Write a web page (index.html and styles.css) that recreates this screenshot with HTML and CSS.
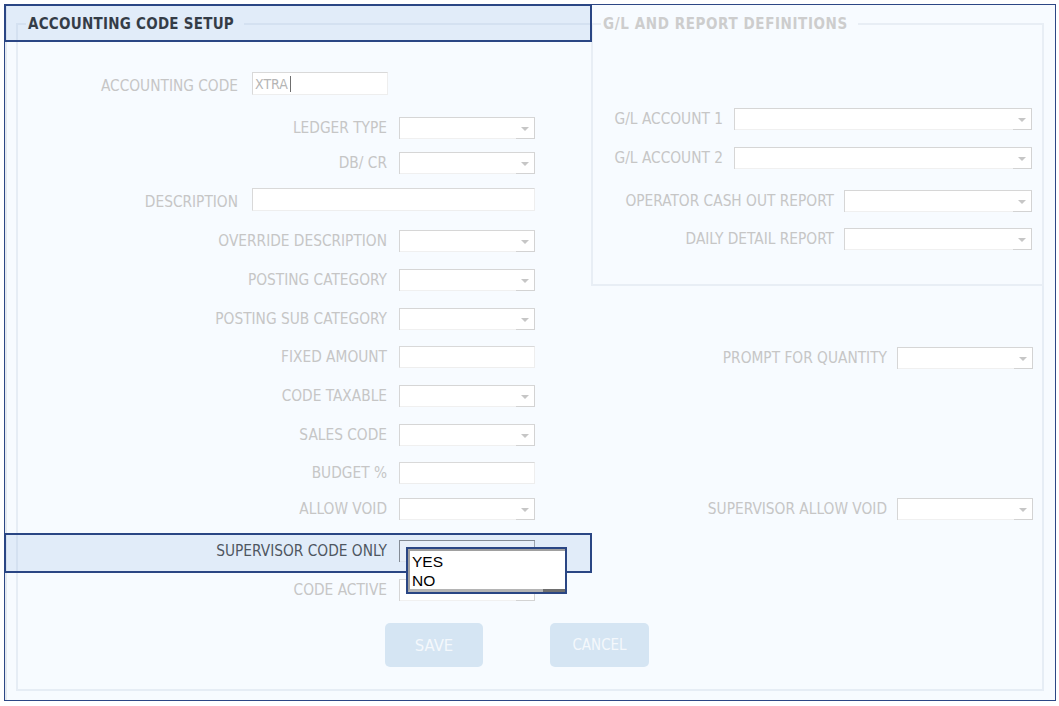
FILE: index.html
```html
<!DOCTYPE html>
<html>
<head>
<meta charset="utf-8">
<link rel="stylesheet" href="styles.css">
</head>
<body>
<div class="frame">
  <fieldset class="panel">
    <legend class="legend legend-main">ACCOUNTING CODE SETUP</legend>
    <div class="panel-body">
      <div class="col-left">
        <div class="row row-wide"><span class="lbl">ACCOUNTING CODE</span><div class="input input-code"><span class="val">XTRA</span><span class="caret"></span></div></div>
        <div class="row"><span class="lbl">LEDGER TYPE</span><div class="select"><span class="sel-body"></span><span class="sel-arrow"></span></div></div>
        <div class="row"><span class="lbl">DB/ CR</span><div class="select"><span class="sel-body"></span><span class="sel-arrow"></span></div></div>
        <div class="row row-wide"><span class="lbl">DESCRIPTION</span><div class="input input-desc"></div></div>
        <div class="row"><span class="lbl">OVERRIDE DESCRIPTION</span><div class="select"><span class="sel-body"></span><span class="sel-arrow"></span></div></div>
        <div class="row"><span class="lbl">POSTING CATEGORY</span><div class="select"><span class="sel-body"></span><span class="sel-arrow"></span></div></div>
        <div class="row"><span class="lbl">POSTING SUB CATEGORY</span><div class="select"><span class="sel-body"></span><span class="sel-arrow"></span></div></div>
        <div class="row"><span class="lbl">FIXED AMOUNT</span><div class="input input-std"></div></div>
        <div class="row"><span class="lbl">CODE TAXABLE</span><div class="select"><span class="sel-body"></span><span class="sel-arrow"></span></div></div>
        <div class="row"><span class="lbl">SALES CODE</span><div class="select"><span class="sel-body"></span><span class="sel-arrow"></span></div></div>
        <div class="row"><span class="lbl">BUDGET %</span><div class="input input-std"></div></div>
        <div class="row"><span class="lbl">ALLOW VOID</span><div class="select"><span class="sel-body"></span><span class="sel-arrow"></span></div></div>
        <div class="row"><span class="lbl lbl-active">SUPERVISOR CODE ONLY</span><div class="select select-active"><span class="sel-body"></span><span class="sel-arrow"></span></div></div>
        <div class="row"><span class="lbl">CODE ACTIVE</span><div class="select"><span class="sel-body"></span><span class="sel-arrow"></span></div></div>
        <div class="row row-buttons"><button class="btn btn-save">SAVE</button><button class="btn btn-cancel">CANCEL</button></div>
      </div>
      <div class="col-right">
        <fieldset class="gl">
          <legend class="legend legend-gl">G/L AND REPORT DEFINITIONS</legend>
          <div class="gl-rows">
            <div class="row row-gl"><span class="lbl">G/L ACCOUNT 1</span><div class="select select-gl"><span class="sel-body"></span><span class="sel-arrow"></span></div></div>
            <div class="row row-gl"><span class="lbl">G/L ACCOUNT 2</span><div class="select select-gl"><span class="sel-body"></span><span class="sel-arrow"></span></div></div>
            <div class="row row-rep"><span class="lbl">OPERATOR CASH OUT REPORT</span><div class="select select-rep"><span class="sel-body"></span><span class="sel-arrow"></span></div></div>
            <div class="row row-rep"><span class="lbl">DAILY DETAIL REPORT</span><div class="select select-rep"><span class="sel-body"></span><span class="sel-arrow"></span></div></div>
          </div>
        </fieldset>
        <div class="row row-side row-prompt"><span class="lbl">PROMPT FOR QUANTITY</span><div class="select"><span class="sel-body"></span><span class="sel-arrow"></span></div></div>
        <div class="row row-side row-savoid"><span class="lbl">SUPERVISOR ALLOW VOID</span><div class="select"><span class="sel-body"></span><span class="sel-arrow"></span></div></div>
      </div>
    </div>
  </fieldset>
  <div class="hl hl-top"></div>
  <div class="hl hl-sup"></div>
  <div class="dropdown">
    <div class="dd-list">
      <div class="opt">YES</div>
      <div class="opt">NO</div>
    </div>
  </div>
</div>
</body>
</html>
```

FILE: styles.css
```css
html, body {
  margin: 0;
  padding: 0;
  background: #ffffff;
}

body {
  font-family: "DejaVu Sans Condensed", "DejaVu Sans", "Liberation Sans", sans-serif;
}

.frame {
  position: relative;
  box-sizing: border-box;
  margin: 4px 0 0 4px;
  width: 1052px;
  height: 697px;
  border: 1px solid #2c4785;
  background: #f7fbff;
  box-shadow: inset 2px 0 0 #e4e9ef;
  padding: 10px 11px 0 11px;
}

.panel {
  box-sizing: border-box;
  margin: 0;
  padding: 0;
  min-width: 0;
  height: 676px;
  border: 2px solid #e6edf5;
}

.legend {
  margin-left: 8px;
  padding: 0 9px 0 2px;
  font-weight: bold;
  font-size: 15px;
  line-height: 18px;
  height: 18px;
  background: #f7fbff;
}

.legend-main {
  color: #111111;
  letter-spacing: 0.25px;
  padding-right: 10px;
}

.legend-gl {
  color: #cdcdcd;
  letter-spacing: 0.6px;
  padding-right: 10px;
}

.panel-body {
  display: flex;
}

.col-left {
  width: 573px;
  flex: none;
  padding-top: 39px;
  display: grid;
  grid-template-rows: 45px 35px 36px 42px 39px 39px 38px 39px 39px 38px 36px 42px 39px 44px 44px;
}

.col-right {
  flex: 1;
  min-width: 0;
}

.row {
  display: flex;
  align-items: flex-start;
}

.lbl {
  flex: none;
  width: 369px;
  margin-right: 12px;
  text-align: right;
  font-size: 15.3px;
  line-height: 22px;
  color: #c6c6c6;
  white-space: nowrap;
}

.lbl-active {
  color: #333333;
}

.row-wide .lbl {
  width: 220px;
  margin-right: 14px;
  padding-top: 3px;
  line-height: 23px;
}

.input {
  box-sizing: border-box;
  height: 23px;
  background: #ffffff;
  border: 1px solid;
  border-color: #d9d9d9 #eeeeee #eeeeee #d9d9d9;
  display: flex;
  align-items: center;
}

.input-code {
  width: 136px;
}

.input-desc {
  width: 283px;
}

.input-std {
  width: 136px;
  height: 22px;
}

.val {
  font-size: 14px;
  color: #b5b5b5;
  padding-left: 2px;
  line-height: 16px;
}

.caret {
  width: 1px;
  height: 16px;
  margin-left: 2px;
  background: #6f6f6f;
}

.select {
  box-sizing: border-box;
  width: 136px;
  height: 22px;
  display: flex;
  background: #ffffff;
  border-top: 1px solid #d6d6d6;
  border-left: 1px solid #d6d6d6;
}

.sel-body {
  flex: 1;
  border-bottom: 1px solid #f0f0f0;
}

.sel-arrow {
  box-sizing: border-box;
  width: 19px;
  flex: none;
  border-right: 1px solid #d3d3d3;
  border-bottom: 1px solid #d3d3d3;
  display: flex;
  align-items: center;
  justify-content: center;
}

.sel-arrow::after {
  content: "";
  width: 0;
  height: 0;
  border-left: 4px solid transparent;
  border-right: 4px solid transparent;
  border-top: 4px solid #c6c6c6;
  margin-top: 1px;
}

.select-active {
  border-top-color: #7a7a7a;
  border-left-color: #7a7a7a;
}

.select-active .sel-arrow {
  border-right-color: #9a9a9a;
  border-bottom-color: #9a9a9a;
}

.row-buttons {
  padding-left: 367px;
  align-items: stretch;
}

.btn {
  box-sizing: border-box;
  height: 44px;
  border: 0;
  border-radius: 5px;
  background: #d5e5f3;
  color: #f4f8fc;
  font-family: "DejaVu Sans Condensed", "DejaVu Sans", "Liberation Sans", sans-serif;
  padding: 0;
}

.btn-save {
  width: 98px;
  font-size: 16.5px;
}

.btn-cancel {
  width: 99px;
  margin-left: 67px;
  font-size: 15px;
}

.gl {
  box-sizing: border-box;
  margin: -18px -2px 0 0;
  padding: 0;
  min-width: 0;
  height: 271px;
  border: 2px solid #e8eef5;
}

.gl-rows {
  padding-top: 75px;
  display: grid;
  grid-template-rows: 39px 43px 38px 22px;
}

.row-gl .lbl {
  width: 130px;
  margin-right: 11px;
}

.select-gl {
  width: 298px;
}

.row-rep .lbl {
  width: 241px;
  margin-right: 10px;
}

.select-rep {
  width: 188px;
}

.row-side .lbl {
  width: 296px;
  margin-right: 10px;
}

.row-prompt {
  margin-top: 61px;
}

.row-savoid {
  margin-top: 129px;
}

.hl {
  position: absolute;
  box-sizing: border-box;
  border: 2px solid #2a4684;
  background: rgba(160, 190, 230, 0.25);
  pointer-events: none;
}

.hl-top {
  left: -1px;
  top: -1px;
  width: 588px;
  height: 38px;
}

.hl-sup {
  left: -1px;
  top: 528px;
  width: 588px;
  height: 40px;
}

.dropdown {
  position: absolute;
  left: 401px;
  top: 542px;
  box-sizing: border-box;
  width: 161px;
  height: 47px;
  border: 2px solid #2a4684;
  background: #ffffff;
}

.dd-list {
  position: relative;
  box-sizing: border-box;
  height: 100%;
  border-left: 2px solid #a0a0a0;
  border-top: 2px solid #a0a0a0;
  border-bottom: 3px solid #b4b4b4;
  padding: 1px 0 0 2px;
  font-family: "Liberation Sans", Arial, sans-serif;
  font-size: 15.5px;
  line-height: 19px;
  color: #000000;
}

.dd-list::after {
  content: "";
  position: absolute;
  right: 0;
  bottom: -3px;
  width: 22px;
  height: 3px;
  background: #6e6e6e;
}

.opt {
  height: 19px;
}
```
